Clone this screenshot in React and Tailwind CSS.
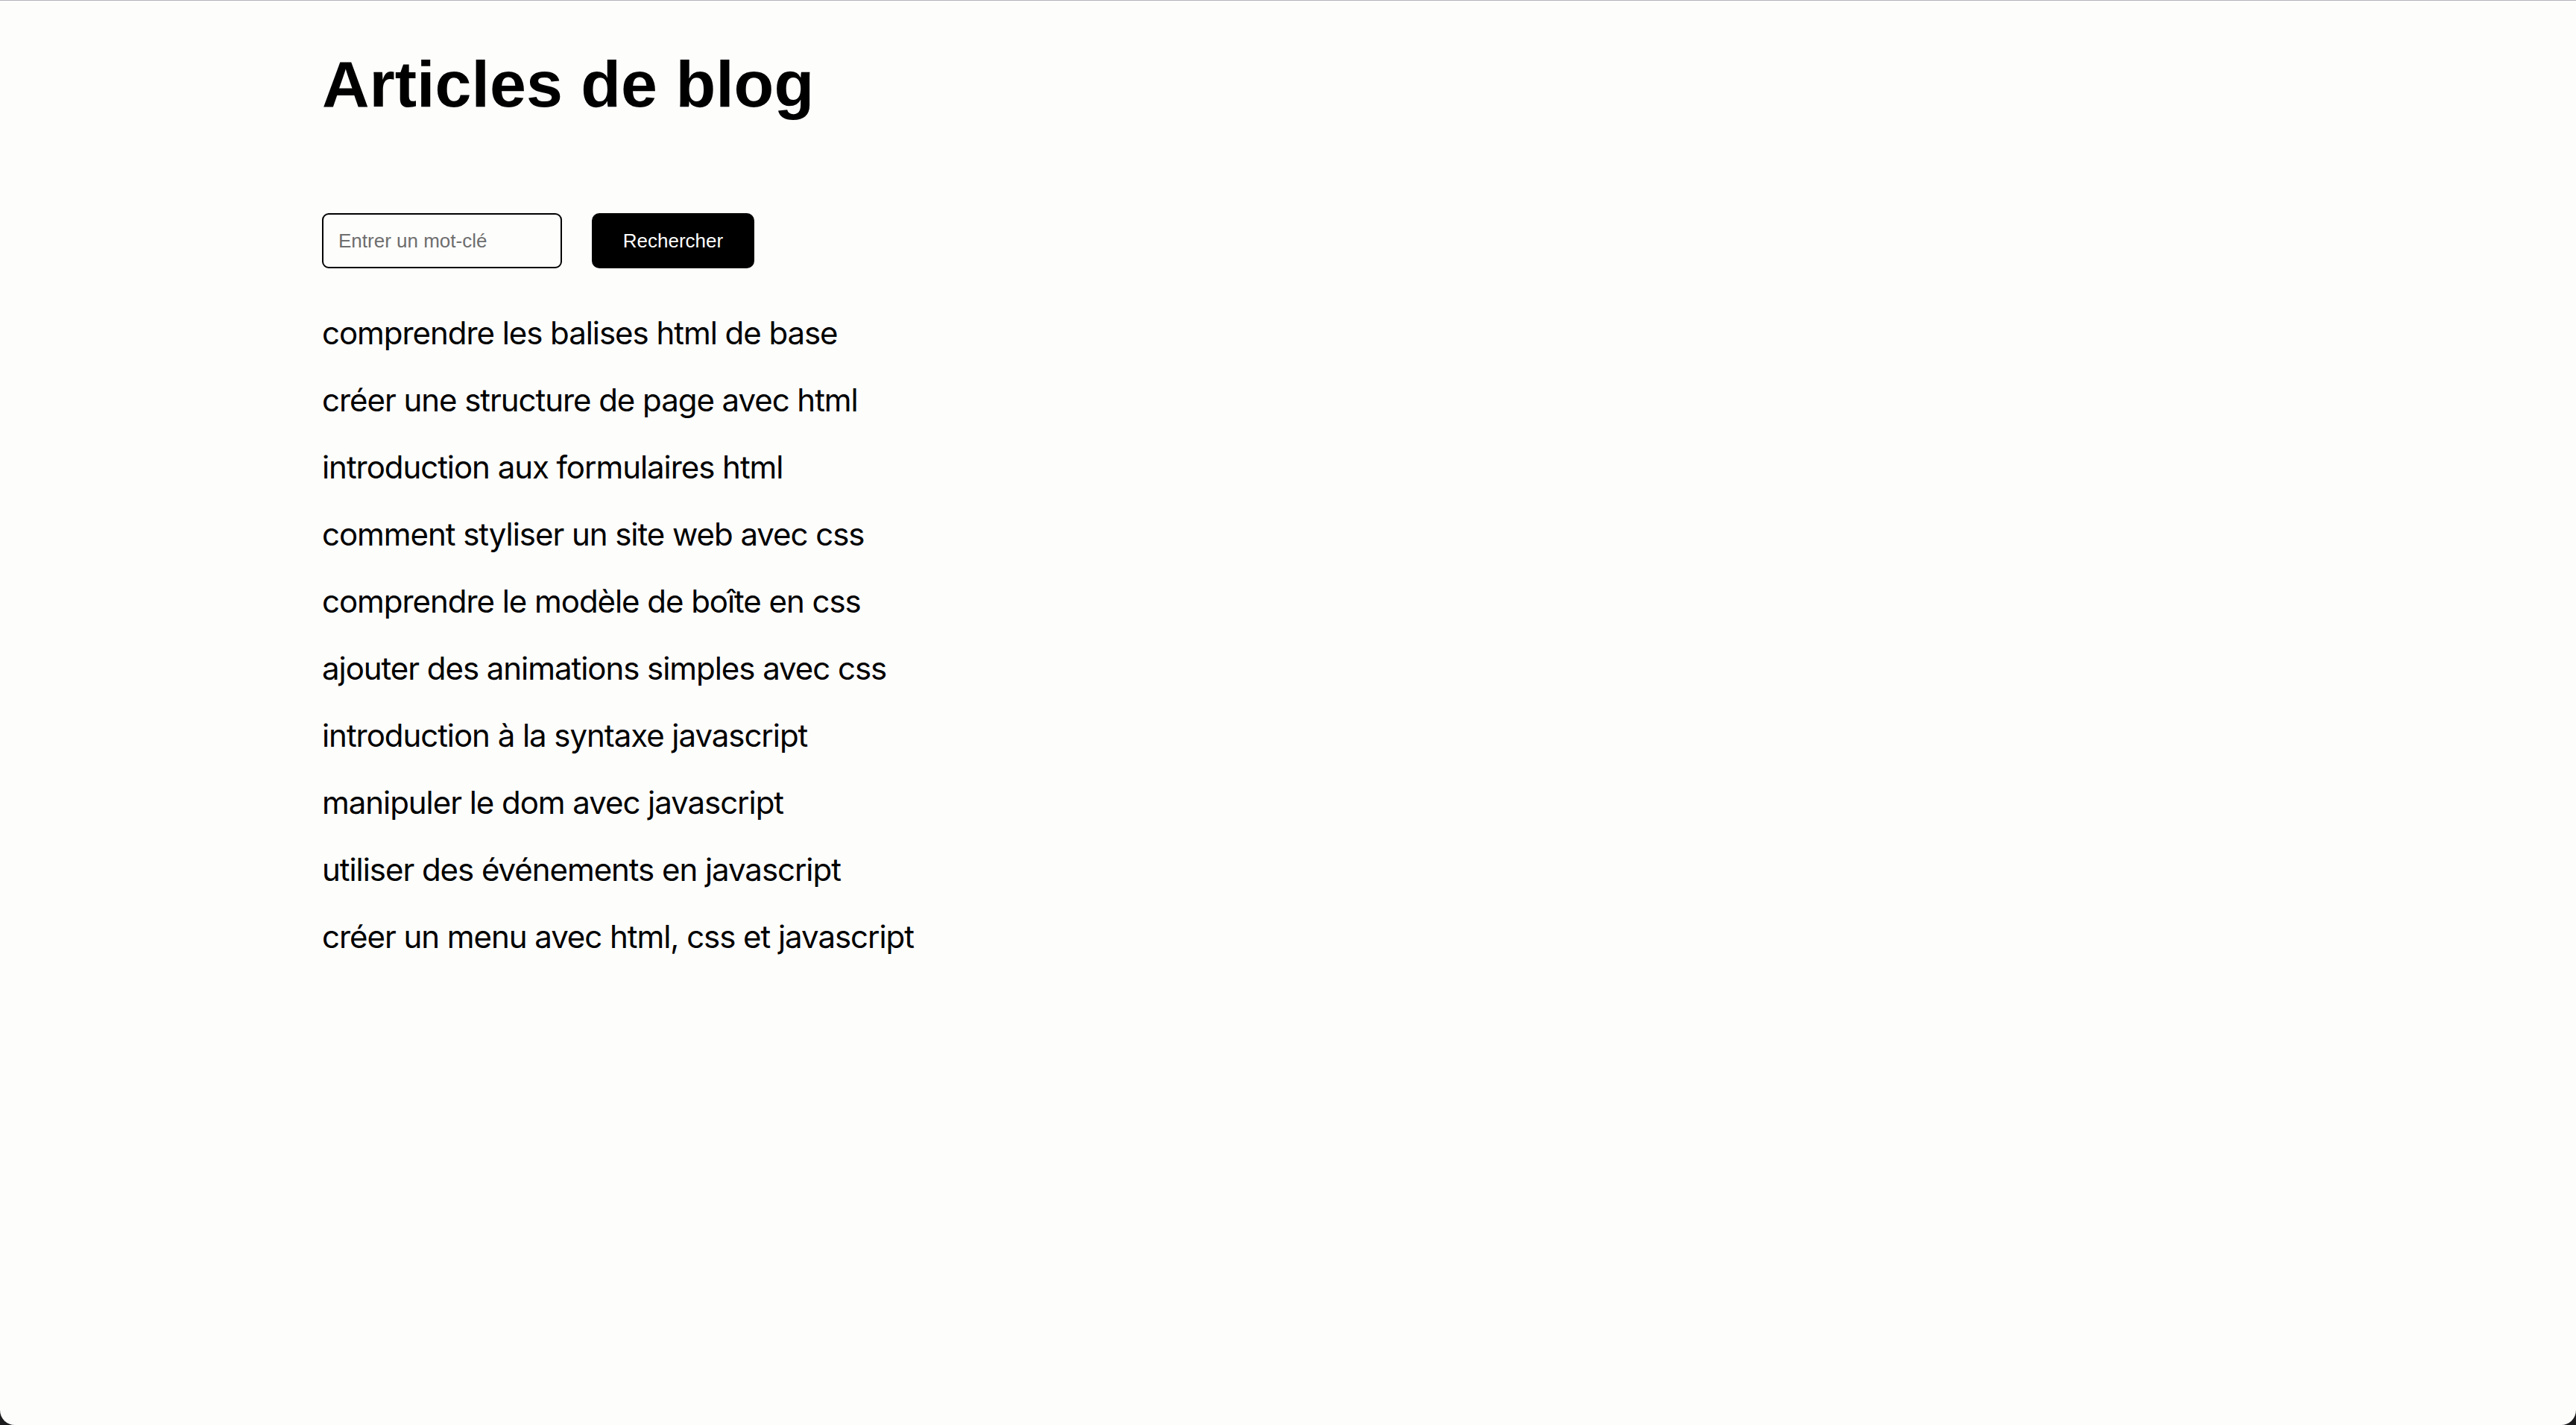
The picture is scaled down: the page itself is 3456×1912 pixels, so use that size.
import React, { useState } from 'react';

const articles = [
  'comprendre les balises html de base',
  'créer une structure de page avec html',
  'introduction aux formulaires html',
  'comment styliser un site web avec css',
  'comprendre le modèle de boîte en css',
  'ajouter des animations simples avec css',
  'introduction à la syntaxe javascript',
  'manipuler le dom avec javascript',
  'utiliser des événements en javascript',
  'créer un menu avec html, css et javascript',
];

const App = () => {
  const [query, setQuery] = useState('');

  return (
    <div className="h-screen bg-[#1c1c1e]">
      <div className="h-full bg-[#fdfdfc] border-t border-[#b4b4bc] rounded-b-[20px] overflow-hidden">
        <main className="w-3/4 mx-auto pt-[68px]">
          {/* Title */}
          <h1 className="text-[88px] leading-none font-bold text-black font-['Liberation_Sans',Arial,sans-serif]">
            Articles de blog
          </h1>

          {/* Search */}
          <form
            onSubmit={(e) => e.preventDefault()}
            className="flex items-center gap-10 mt-[129px] font-['Liberation_Sans',Arial,sans-serif]"
          >
            <input
              type="text"
              placeholder="Entrer un mot-clé"
              value={query}
              onChange={(e) => setQuery(e.target.value)}
              className="w-[322px] h-[74px] px-5 border-2 border-black rounded-[9px] bg-transparent text-[26px] text-black placeholder:text-[#6e6e6e] outline-none"
            />
            <button
              type="submit"
              className="h-[74px] w-[218px] bg-black text-white text-[26px] rounded-[10px]"
            >
              Rechercher
            </button>
          </form>

          {/* Articles */}
          <ul className="mt-[42px] flex flex-col font-['Inter',sans-serif] text-[42px] leading-[90px] tracking-[-0.025em] text-black">
            {articles.map((title) => (
              <li key={title}>{title}</li>
            ))}
          </ul>
        </main>
      </div>
    </div>
  );
};

export default App;
